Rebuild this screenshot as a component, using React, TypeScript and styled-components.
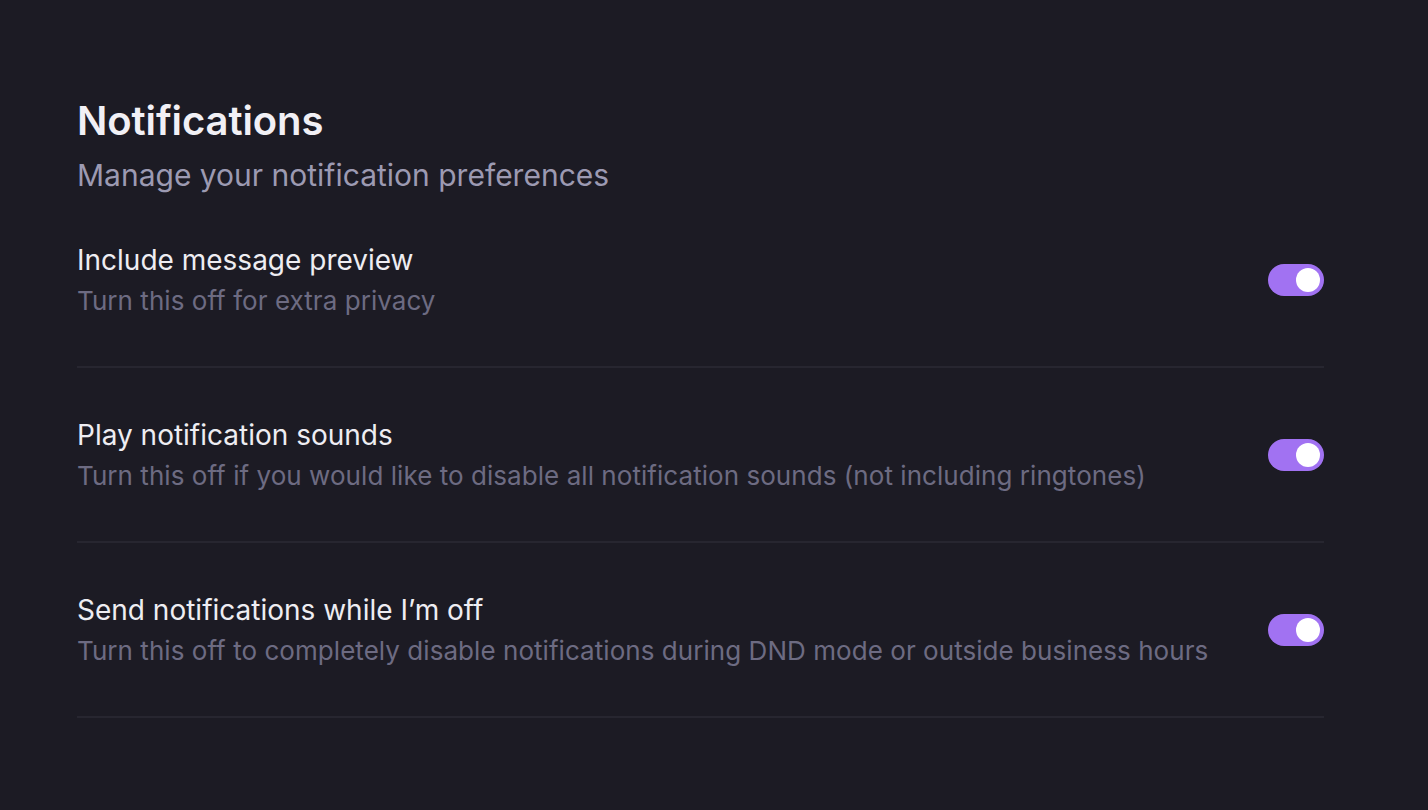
import React, { useState } from "react";
import styled, { createGlobalStyle } from "styled-components";

const GlobalStyle = createGlobalStyle`
  html, body {
    margin: 0;
    padding: 0;
    background: #1c1b24;
  }
  body {
    font-family: Inter, "Noto Sans", "Liberation Sans", sans-serif;
    -webkit-font-smoothing: antialiased;
  }
`;

const settings = [
  {
    id: "preview",
    title: "Include message preview",
    hint: "Turn this off for extra privacy",
  },
  {
    id: "sounds",
    title: "Play notification sounds",
    hint: "Turn this off if you would like to disable all notification sounds (not including ringtones)",
  },
  {
    id: "offline",
    title: "Send notifications while I\u2019m off",
    hint: "Turn this off to completely disable notifications during DND mode or outside business hours",
  },
];

export default function App() {
  const [values, setValues] = useState<Record<string, boolean>>({
    preview: true,
    sounds: true,
    offline: true,
  });

  return (
    <>
      <GlobalStyle />
      <Page>
        <Header>
          <Title>Notifications</Title>
          <Subtitle>Manage your notification preferences</Subtitle>
        </Header>
        <List>
          {settings.map((s) => (
            <Row key={s.id}>
              <Text>
                <RowTitle>{s.title}</RowTitle>
                <RowHint>{s.hint}</RowHint>
              </Text>
              <Switch
                type="button"
                $on={values[s.id]}
                aria-pressed={values[s.id]}
                onClick={() => setValues((v) => ({ ...v, [s.id]: !v[s.id] }))}
              >
                <Knob />
              </Switch>
            </Row>
          ))}
        </List>
      </Page>
    </>
  );
}

const Page = styled.div`
  min-height: 810px;
  box-sizing: border-box;
  padding: 97px 104px 0 77px;
  background: #1c1b24;
`;

const Header = styled.header`
  display: flex;
  flex-direction: column;
  gap: 10px;
`;

const Title = styled.h1`
  margin: 0;
  font-size: 40px;
  line-height: 48px;
  font-weight: 600;
  color: #f1f0f5;
  letter-spacing: -0.1px;
`;

const Subtitle = styled.p`
  margin: 0;
  font-size: 30px;
  line-height: 40px;
  font-weight: 400;
  color: #9c9ab2;
`;

const List = styled.div`
  display: flex;
  flex-direction: column;
  margin-top: 47px;
`;

const Row = styled.div`
  display: flex;
  align-items: center;
  justify-content: space-between;
  gap: 24px;
  padding-bottom: 48px;
  margin-bottom: 49px;
  border-bottom: 2px solid #272630;
`;

const Text = styled.div`
  display: flex;
  flex-direction: column;
  gap: 6px;
`;

const RowTitle = styled.div`
  font-size: 28px;
  line-height: 36px;
  color: #eeedf2;
`;

const RowHint = styled.div`
  font-size: 26px;
  line-height: 34px;
  letter-spacing: 0.05px;
  color: #6d6b82;
`;

const Switch = styled.button<{ $on: boolean }>`
  flex: none;
  width: 56px;
  height: 32px;
  padding: 4px;
  border: none;
  border-radius: 16px;
  background: ${(p) => (p.$on ? "#a172f2" : "#3a3845")};
  display: flex;
  justify-content: ${(p) => (p.$on ? "flex-end" : "flex-start")};
  cursor: pointer;
`;

const Knob = styled.span`
  width: 24px;
  height: 24px;
  border-radius: 50%;
  background: #ffffff;
`;
